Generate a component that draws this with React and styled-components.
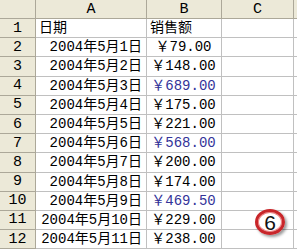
import React from 'react';
import styled, { createGlobalStyle } from 'styled-components';

const GlobalStyle = createGlobalStyle`
  html, body {
    margin: 0;
    padding: 0;
    background: #ffffff;
  }
`;

const rows = [
  { date: '日期', amount: '销售额', head: true },
  { date: '2004年5月1日', amount: '￥79.00' },
  { date: '2004年5月2日', amount: '￥148.00' },
  { date: '2004年5月3日', amount: '￥689.00', blue: true },
  { date: '2004年5月4日', amount: '￥175.00' },
  { date: '2004年5月5日', amount: '￥221.00' },
  { date: '2004年5月6日', amount: '￥568.00', blue: true },
  { date: '2004年5月7日', amount: '￥200.00' },
  { date: '2004年5月8日', amount: '￥174.00' },
  { date: '2004年5月9日', amount: '￥469.50', blue: true },
  { date: '2004年5月10日', amount: '￥229.00' },
  { date: '2004年5月11日', amount: '￥238.00' },
];

const Wrapper = styled.div`
  position: relative;
  width: 297px;
  height: 249px;
  overflow: hidden;
  font-family: "Liberation Mono", "Noto Sans CJK SC", monospace;
  font-size: 14px;
  color: #000;
`;

const Sheet = styled.div`
  display: grid;
  grid-template-columns: 36px 111px 75px 72px 1fr;
  grid-template-rows: 19px;
  grid-auto-rows: 19.2px;
`;

const Head = styled.div`
  box-sizing: border-box;
  display: flex;
  align-items: center;
  justify-content: center;
  background: #ece9d8;
  border-right: 1px solid #aca899;
  border-bottom: 1px solid #aca899;
  font-size: 15px;
  line-height: 1;
`;

const Cell = styled.div`
  box-sizing: border-box;
  display: flex;
  align-items: center;
  justify-content: ${({ $align }) => $align};
  padding: 0 4px 0 3px;
  border-right: 1px solid #c0c0c0;
  border-bottom: 1px solid #c0c0c0;
  color: ${({ $blue }) => ($blue ? '#333399' : '#000')};
  white-space: nowrap;
  line-height: 1;
`;

const Badge = styled.div`
  position: absolute;
  left: 255px;
  top: 209px;
  width: 30px;
  height: 26px;
  box-sizing: border-box;
  border-radius: 50%;
  border: 3px solid #c8262a;
  background: radial-gradient(circle at 40% 35%, #ffffff 55%, #f3dede 100%);
  box-shadow: 2px 2px 3px rgba(0, 0, 0, 0.4), inset 0 0 0 1px #f08080;
  display: flex;
  align-items: center;
  justify-content: center;
  font-family: "Liberation Sans", Arial, sans-serif;
  font-size: 21px;
  color: #111;
  line-height: 1;
`;

export default function App() {
  return (
    <Wrapper>
      <GlobalStyle />
      <Sheet>
        <Head />
        <Head>A</Head>
        <Head>B</Head>
        <Head>C</Head>
        <Head />
        {rows.map((row, i) => (
          <React.Fragment key={i}>
            <Head>{i + 1}</Head>
            <Cell $align={row.head ? 'flex-start' : 'flex-end'}>{row.date}</Cell>
            <Cell $align={row.head ? 'flex-start' : 'center'} $blue={row.blue}>
              {row.amount}
            </Cell>
            <Cell />
            <Cell />
          </React.Fragment>
        ))}
      </Sheet>
      <Badge>6</Badge>
    </Wrapper>
  );
}
